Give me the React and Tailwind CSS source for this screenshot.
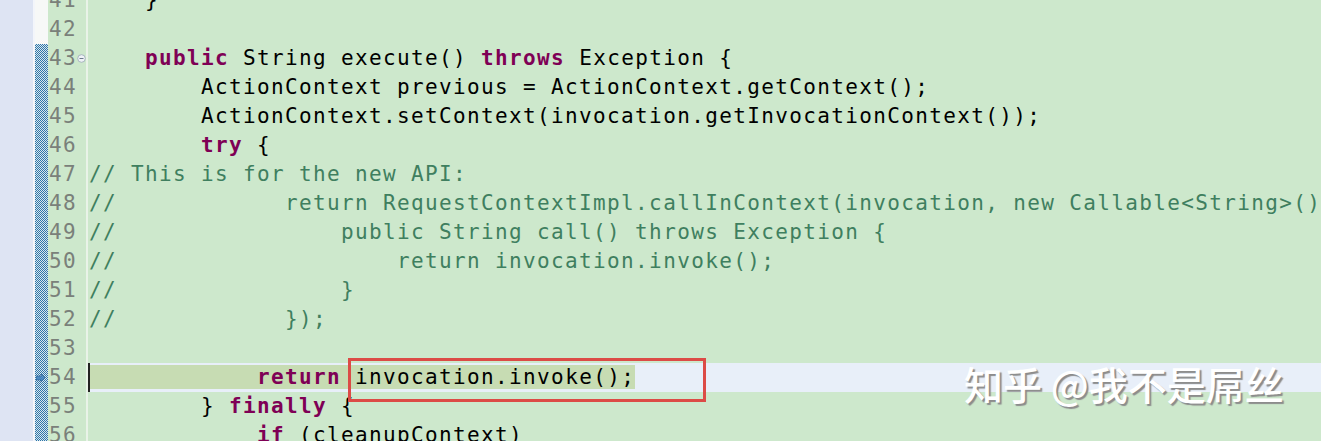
import React from "react";

const K = "k";
const C = "c";
const N = "n";

const lines = [
  { n: 41, t: [["    }", N]] },
  { n: 42, t: [] },
  { n: 43, t: [["    ", N], ["public", K], [" String execute() ", N], ["throws", K], [" Exception {", N]], fold: true },
  { n: 44, t: [["        ActionContext previous = ActionContext.getContext();", N]] },
  { n: 45, t: [["        ActionContext.setContext(invocation.getInvocationContext());", N]] },
  { n: 46, t: [["        ", N], ["try", K], [" {", N]] },
  { n: 47, t: [["// This is for the new API:", C]] },
  { n: 48, t: [["//            return RequestContextImpl.callInContext(invocation, new Callable<String>() {", C]] },
  { n: 49, t: [["//                public String call() throws Exception {", C]] },
  { n: 50, t: [["//                    return invocation.invoke();", C]] },
  { n: 51, t: [["//                }", C]] },
  { n: 52, t: [["//            });", C]] },
  { n: 53, t: [] },
  { n: 54, t: [["            ", N], ["return", K], [" invocation.invoke();", N]], current: true },
  { n: 55, t: [["        } ", N], ["finally", K], [" {", N]] },
  { n: 56, t: [["            ", N], ["if", K], [" (cleanupContext)", N]] },
];

function Tok({ text, type }) {
  if (type === K) return <span className="font-bold text-[#7f0055]">{text}</span>;
  if (type === C) return <span className="text-[#3f7f5f]">{text}</span>;
  return <span className="text-black">{text}</span>;
}

export default function App() {
  const mono = { fontFamily: '"DejaVu Sans Mono", "Liberation Mono", monospace' };
  return (
    <div
      className="relative flex w-[1321px] h-[441px] overflow-hidden bg-[#cde8cc]"
      style={mono}
    >
      {/* left lavender strip */}
      <div className="w-[35px] shrink-0 bg-[#dee4f3] border-r-2 border-[#f3f5fa]" />
      {/* change ruler */}
      <div className="relative w-[13px] shrink-0 flex flex-col">
        <div className="h-[44px] shrink-0 bg-[#f7f8f7]" />
        <div className="flex-1 bg-[repeating-conic-gradient(#2f76a8_0_25%,#d7e6ef_0_50%)] bg-[length:2px_2px]" />
        <svg className="absolute left-[1px] top-[373px]" width="10" height="10" viewBox="0 0 10 10">
          <path d="M0 3 H5 V1 L9 5 L5 9 V7 H0 Z" fill="#4a88c0" stroke="#2c5f8f" strokeWidth="0.6" />
        </svg>
      </div>
      {/* line numbers */}
      <div className="w-[38px] shrink-0 flex flex-col -mt-[14px]">
        {lines.map((l) => (
          <div
            key={l.n}
            className="relative shrink-0 h-[29px] leading-[29px] text-[21px] tracking-[1.36px] text-[#7a807a] pl-[1px]"
          >
            {l.n}
            {l.fold && (
              <svg className="absolute left-[29px] top-[10px]" width="9" height="9" viewBox="0 0 9 9">
                <circle cx="4.5" cy="4.5" r="3.8" fill="#eef2f6" stroke="#9aa8b8" strokeWidth="0.8" />
                <path d="M2.5 4.5 H6.5" stroke="#5b6b80" strokeWidth="0.9" />
              </svg>
            )}
          </div>
        ))}
      </div>
      {/* separator */}
      <div className="w-[2px] shrink-0 bg-[#e9f3e8]" />
      {/* code */}
      <div className="flex-1 flex flex-col -mt-[14px] pl-[1px] min-w-0">
        {lines.map((l) => (
          <div
            key={l.n}
            className={
              "relative shrink-0 h-[29px] leading-[29px] text-[21px] tracking-[1.36px] whitespace-pre " +
              (l.current ? "bg-[#e8eff9]" : "")
            }
          >
            {l.current && (
              <div className="absolute left-[-1px] top-0 w-[2px] h-[29px] bg-[#222222]" />
            )}
            <span className={l.current ? "bg-[#c7dcb3]" : ""}>
              {l.t.map(([text, type], i) => (
                <Tok key={i} text={text} type={type} />
              ))}
            </span>
          </div>
        ))}
      </div>
      {/* red box */}
      <div className="absolute left-[348px] top-[358px] w-[358px] h-[44px] border-[3px] border-[#dc4b46]" />
      {/* watermark */}
      <div
        className="absolute left-[964px] top-[358px] text-[39px] leading-[50px] text-white whitespace-pre [text-shadow:2px_2px_1px_#8c8c8c]"
        style={{ fontFamily: '"Noto Sans CJK SC", "Noto Sans", sans-serif', fontWeight: 500 }}
      >
        知乎 @我不是屌丝
      </div>
    </div>
  );
}
